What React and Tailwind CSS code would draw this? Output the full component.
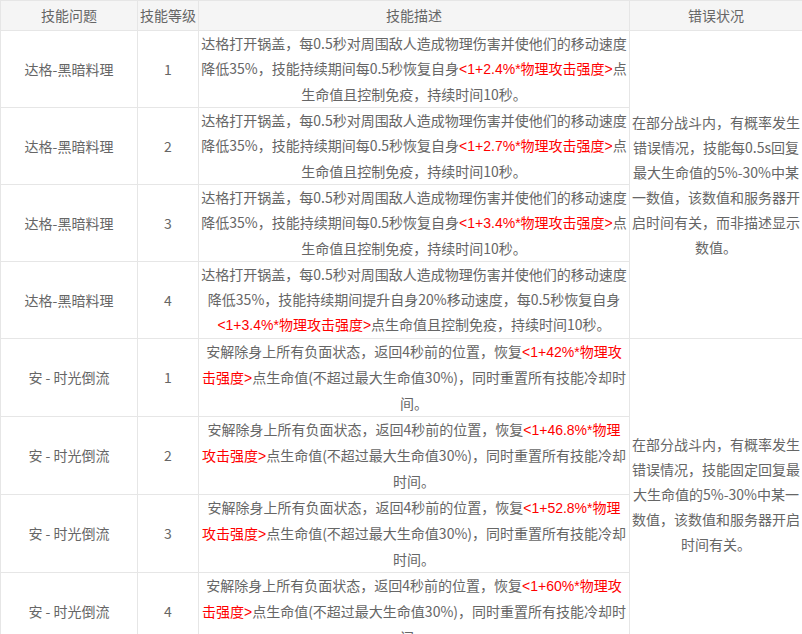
const R = ({ children }) => (
  <span className="text-[#ff0000]" style={{ fontFamily: '"Liberation Sans", "Noto Sans CJK SC", sans-serif' }}>{children}</span>
);

const dage = (v, i) =>
  i === 3 ? (
    <>达格打开锅盖，每0.5秒对周围敌人造成物理伤害并使他们的移动速度降低35%，技能持续期间提升自身20%移动速度，每0.5秒恢复自身<R>&lt;1+3.4%*物理攻击强度&gt;</R>点生命值且控制免疫，持续时间10秒。</>
  ) : (
    <>达格打开锅盖，每0.5秒对周围敌人造成物理伤害并使他们的移动速度降低35%，技能持续期间每0.5秒恢复自身<R>&lt;1+{v}*物理攻击强度&gt;</R>点生命值且控制免疫，持续时间10秒。</>
  );

const an = (v) => (
  <>安解除身上所有负面状态，返回4秒前的位置，恢复<R>&lt;1+{v}*物理攻击强度&gt;</R>点生命值(不超过最大生命值30%)，同时重置所有技能冷却时间。</>
);

const rows = [
  ["达格-黑暗料理", 1, dage("2.4%", 0)],
  ["达格-黑暗料理", 2, dage("2.7%", 1)],
  ["达格-黑暗料理", 3, dage("3.4%", 2)],
  ["达格-黑暗料理", 4, dage("3.4%", 3)],
  ["安 - 时光倒流", 1, an("42%")],
  ["安 - 时光倒流", 2, an("46.8%")],
  ["安 - 时光倒流", 3, an("52.8%")],
  ["安 - 时光倒流", 4, an("60%")],
];

const errs = [
  "在部分战斗内，有概率发生错误情况，技能每0.5s回复最大生命值的5%-30%中某一数值，该数值和服务器开启时间有关，而非描述显示数值。",
  "在部分战斗内，有概率发生错误情况，技能固定回复最大生命值的5%-30%中某一数值，该数值和服务器开启时间有关。",
];

export default function App() {
  const td = "border border-[#e6e6e6] text-center align-middle px-[2px]";
  return (
    <div className="w-[802px] h-[634px] overflow-hidden bg-white text-[#666] text-[14px] leading-[25px]" style={{ fontFamily: '"Noto Sans CJK SC", sans-serif' }}>
      <table className="border-collapse table-fixed w-[802px]">
        <colgroup>
          <col className="w-[137px]" />
          <col className="w-[61px]" />
          <col className="w-[431px]" />
          <col className="w-[173px]" />
        </colgroup>
        <thead>
          <tr className="h-[30px] bg-[#f5f5f5]">
            <th className={td + " font-normal"}>技能问题</th>
            <th className={td + " font-normal"}>技能等级</th>
            <th className={td + " font-normal"}>技能描述</th>
            <th className={td + " font-normal"}>错误状况</th>
          </tr>
        </thead>
        <tbody>
          {rows.map((r, i) => (
            <tr key={i} className="h-[76px]">
              <td className={td}>{r[0]}</td>
              <td className={td}>{r[1]}</td>
              <td className={td}>{r[2]}</td>
              {i % 4 === 0 && (
                <td rowSpan={4} className={td}>{errs[i / 4]}</td>
              )}
            </tr>
          ))}
        </tbody>
      </table>
    </div>
  );
}
